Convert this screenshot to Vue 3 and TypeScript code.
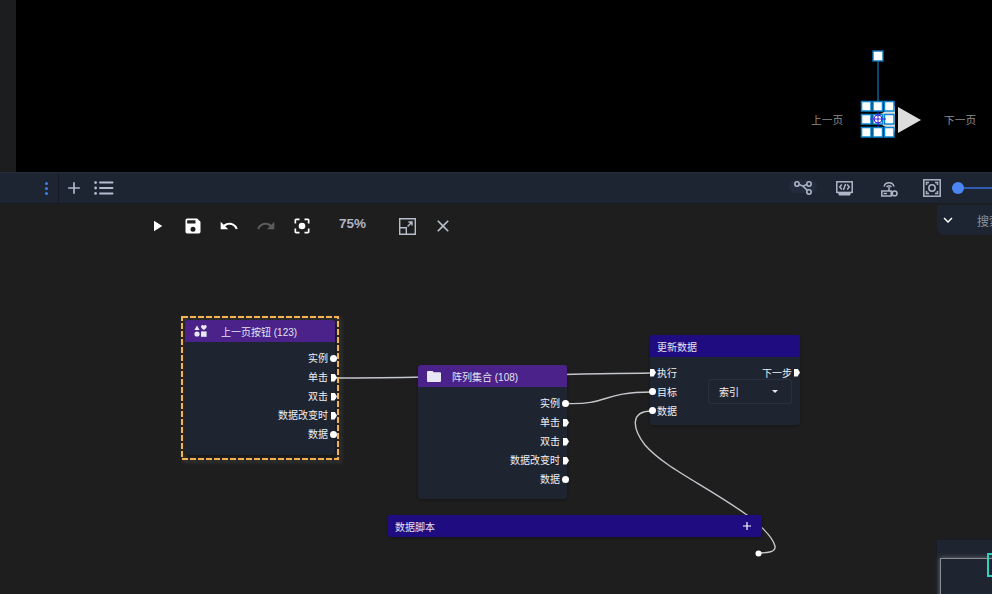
<template>
  <div class="editor">
    <section class="preview">
      <div class="preview-side"></div>
      <div class="preview-stage">
        <span class="page-label prev">上一页</span>
        <span class="page-label next">下一页</span>
        <svg class="stage-svg" viewBox="840 40 100 110">
          <path d="M895 106 L871 119 L895 132 Z" fill="#ddd" />
          <path d="M898 107 L921 120 L898 133 Z" fill="#ddd" />
          <line x1="878" y1="61" x2="878" y2="101" stroke="#0f5f8f" stroke-width="1.5" />
          <rect x="873" y="51" width="10" height="10" fill="#fff" stroke="#0a76b8" stroke-width="1.4" />
          <rect
            v-for="h in handles"
            :key="h.key"
            :x="h.x"
            :y="h.y"
            width="9.5"
            height="9.5"
            fill="#fff"
            stroke="#0a86d0"
            stroke-width="1.5"
          />
          <g stroke="#3b1de0" fill="none">
            <circle cx="878" cy="119" r="4" />
            <line x1="870" y1="119" x2="886" y2="119" />
            <line x1="878" y1="111" x2="878" y2="127" />
          </g>
        </svg>
      </div>
    </section>

    <header class="toolbar">
      <div class="toolbar-left">
        <div class="kebab"><i></i><i></i><i></i></div>
        <div class="divider"></div>
        <svg class="tool-icon plus" viewBox="0 0 24 24"><path d="M19 13h-6v6h-2v-6H5v-2h6V5h2v6h6v2z" /></svg>
        <svg class="tool-icon list" viewBox="0 0 20 14">
          <circle cx="1.6" cy="1.6" r="1.4" /><rect x="5" y="0.6" width="14.5" height="2" rx="1" />
          <circle cx="1.6" cy="7" r="1.4" /><rect x="5" y="6" width="14.5" height="2" rx="1" />
          <circle cx="1.6" cy="12.4" r="1.4" /><rect x="5" y="11.4" width="14.5" height="2" rx="1" />
        </svg>
      </div>
      <div class="toolbar-right">
        <div class="graph-pill">
          <svg class="line-icon" viewBox="0 0 18 14">
            <circle cx="3" cy="3" r="2.2" /><circle cx="15" cy="3" r="2.2" /><circle cx="15" cy="11" r="2.2" />
            <path d="M5.1 3.4 L9 5.2 L12.9 3.4 M9 5.2 L13.4 9.4" />
          </svg>
        </div>
        <svg class="line-icon code" viewBox="0 0 17 15">
          <rect x="0.8" y="0.8" width="15.4" height="10.6" />
          <path class="solid" d="M2 11.5h13l-1 3H3z" />
          <path d="M5.8 3.5 L3.8 6 L5.8 8.5M11.2 3.5 L13.2 6 L11.2 8.5M9.6 3 L7.4 9" />
        </svg>
        <svg class="line-icon net" viewBox="0 0 17 17">
          <path d="M3 6.5a5.2 5.2 0 0 1 10 0M5.6 7a2.8 2.8 0 0 1 4.8 0M8 7v4" />
          <rect x="0.8" y="11" width="9.4" height="5" />
          <circle cx="13.6" cy="13.4" r="2.4" />
          <path d="M2.6 13.5h3.4" />
        </svg>
        <svg class="line-icon frame" viewBox="0 0 18 18">
          <rect x="0.8" y="0.8" width="16.4" height="16.4" />
          <circle cx="9" cy="9" r="3.2" />
          <path d="M3.5 6V3.5H6M12 3.5h2.5V6M3.5 12v2.5H6M12 14.5h2.5V12" />
        </svg>
        <div class="zoom-slider"><span class="knob"></span><span class="rail"></span></div>
      </div>
    </header>

    <main class="canvas">
      <svg class="wires" viewBox="0 204 992 390">
        <path v-for="w in wires" :key="w" :d="w" />
        <circle class="wire-end" cx="758.5" cy="553.5" r="3" />
      </svg>

      <div class="actions">
        <svg class="act play" viewBox="0 0 24 24"><path d="M8 5v14l11-7z" /></svg>
        <svg class="act save" viewBox="0 0 24 24"><path d="M17 3H5a2 2 0 0 0-2 2v14a2 2 0 0 0 2 2h14a2 2 0 0 0 2-2V7l-4-4zm-5 16a3 3 0 1 1 0-6 3 3 0 0 1 0 6zm3-10H5V5h10v4z" /></svg>
        <svg class="act undo" viewBox="0 0 24 24"><path d="M12.5 8c-2.65 0-5.05.99-6.9 2.6L2 7v9h9l-3.62-3.62c1.39-1.16 3.16-1.88 5.12-1.88 3.54 0 6.55 2.31 7.6 5.5l2.37-.78C21.08 11.03 17.15 8 12.5 8z" /></svg>
        <svg class="act redo" viewBox="0 0 24 24"><path d="M18.4 10.6C16.55 8.99 14.15 8 11.5 8c-4.65 0-8.58 3.03-9.96 7.22L3.9 16c1.05-3.19 4.05-5.5 7.6-5.5 1.95 0 3.73.72 5.12 1.88L13 16h9V7l-3.6 3.6z" /></svg>
        <svg class="act focus" viewBox="0 0 24 24"><path d="M12 8a4 4 0 1 0 0 8 4 4 0 0 0 0-8zm-7 7H3v4c0 1.1.9 2 2 2h4v-2H5v-4zM5 5h4V3H5c-1.1 0-2 .9-2 2v4h2V5zm14-2h-4v2h4v4h2V5c0-1.1-.9-2-2-2zm0 16h-4v2h4c1.1 0 2-.9 2-2v-4h-2v4z" /></svg>
        <span class="zoom-text">75%</span>
        <svg class="act expand" viewBox="0 0 17 17">
          <path d="M0.7 0.7h15.6v15.6H0.7zM0.7 9.7h6.6v6.6M8.6 8.4 13 4M9.4 4H13v3.6" fill="none" stroke="currentColor" stroke-width="1.4" />
        </svg>
        <svg class="act close" viewBox="0 0 24 24"><path d="M19 6.41 17.59 5 12 10.59 6.41 5 5 6.41 10.59 12 5 17.59 6.41 19 12 13.41 17.59 19 19 17.59 13.41 12z" /></svg>
      </div>

      <div class="search-tab">
        <svg viewBox="0 0 24 24" class="chevron"><path d="M7.41 8.59 12 13.17l4.59-4.58L18 10l-6 6-6-6z" /></svg>
        <span>搜索</span>
      </div>

      <!-- 按钮节点 -->
      <svg class="selected-outline" viewBox="0 0 158 144">
        <rect x="1" y="1" width="156" height="142" />
      </svg>

      <article v-for="node in nodes" :key="node.title" class="node" :style="node.style">
        <div class="node-head" :class="[node.kind, node.icon]">
          <svg v-if="node.icon === 'shapes'" class="node-icon" viewBox="0 0 13 12">
            <path d="M3 0.5 5.6 5H0.4z" /><path d="M9.8 5C8.4 3.9 7 2.9 7 1.7 7 .7 7.8 0 8.6 0c.5 0 1 .3 1.2.8.2-.5.7-.8 1.2-.8.9 0 1.7.7 1.7 1.7 0 1.2-1.5 2.2-2.9 3.3z" />
            <circle cx="3" cy="9" r="2.6" /><rect x="7" y="6.4" width="5.6" height="5.4" />
          </svg>
          <svg v-if="node.icon === 'folder'" class="node-icon" viewBox="0 0 14 11">
            <path d="M1 0h4.5l1.3 1.3H13a1 1 0 0 1 1 1V10a1 1 0 0 1-1 1H1a1 1 0 0 1-1-1V1a1 1 0 0 1 1-1z" />
          </svg>
          <span>{{ node.title }}</span>
        </div>
        <ul class="ports">
          <li v-for="p in node.ports" :key="p.name">
            <span>{{ p.name }}</span>
            <i :class="p.type"></i>
          </li>
        </ul>
      </article>

      <!-- 更新数据节点 -->
      <article class="node update">
        <div class="node-head script"><span>更新数据</span></div>
        <div class="update-body">
          <ul class="inputs">
            <li><i class="flow"></i><span>执行</span></li>
            <li><i class="value"></i><span>目标</span></li>
            <li><i class="value"></i><span>数据</span></li>
          </ul>
          <div class="update-right">
            <div class="next-row"><span>下一步</span><i class="flow"></i></div>
            <div class="select"><span>索引</span><b></b></div>
          </div>
        </div>
      </article>

      <div class="script-bar">
        <span>数据脚本</span>
        <svg viewBox="0 0 24 24"><path d="M19 13h-6v6h-2v-6H5v-2h6V5h2v6h6v2z" /></svg>
      </div>

      <div class="minimap">
        <div class="minimap-view"></div>
        <div class="minimap-mark"></div>
      </div>
    </main>
  </div>
</template>

<script setup lang="ts">
interface Port {
  name: string
  type: 'value' | 'flow'
}

const eventPorts: Port[] = [
  { name: '实例', type: 'value' },
  { name: '单击', type: 'flow' },
  { name: '双击', type: 'flow' },
  { name: '数据改变时', type: 'flow' },
  { name: '数据', type: 'value' },
]

const canvasTop = 204

function place(left: number, top: number, width: number, height: number) {
  return {
    left: `${left}px`,
    top: `${top - canvasTop}px`,
    width: `${width}px`,
    height: `${height}px`,
  }
}

const nodes = [
  {
    title: '上一页按钮 (123)',
    kind: 'component',
    icon: 'shapes',
    ports: eventPorts,
    style: place(185, 320, 150, 135),
  },
  {
    title: '阵列集合 (108)',
    kind: 'component',
    icon: 'folder',
    ports: eventPorts,
    style: place(418, 365, 149, 134),
  },
]

const wires = [
  'M334 378 C 420 378, 560 374, 652 373',
  'M566 403.5 C 610 405, 600 392, 652 392',
  'M652 411 C 630 411, 632 428, 645 445 C 665 468, 705 485, 747 515 C 757 523, 772 535, 775 546 C 776 552, 768 553, 758 553',
]

const handles = [101.5, 114.5, 127.5].flatMap((y, r) =>
  [861.5, 873, 884.5].map((x, c) => ({ key: `${r}-${c}`, x, y })),
)
</script>

<style>
html,
body {
  margin: 0;
  background: #1e1e1e;
  overflow: hidden;
}
</style>

<style scoped>
.editor {
  width: 992px;
  height: 594px;
  display: flex;
  flex-direction: column;
  overflow: hidden;
  font-family: "Liberation Sans", "Noto Sans CJK SC", sans-serif;
  font-size: 10px;
  color: #eef0f5;
  background: #1e1e1e;
}

.preview {
  display: flex;
  height: 172px;
  flex: none;
}

.preview-side {
  width: 16px;
  background: #1c1d1f;
}

.preview-stage {
  position: relative;
  flex: 1;
  background: #000;
}

.stage-svg {
  position: absolute;
  left: 824px;
  top: 40px;
  width: 100px;
  height: 110px;
}

.page-label {
  position: absolute;
  top: 113px;
  line-height: 14px;
  font-size: 10.7px;
  color: #8f8f8f;
}

.page-label.prev {
  left: 795px;
}

.page-label.next {
  left: 928px;
}

.toolbar {
  flex: none;
  height: 32px;
  box-sizing: border-box;
  display: flex;
  align-items: center;
  justify-content: space-between;
  background: #1e2532;
  border-top: 1px solid #262d3a;
  border-bottom: 1px solid #171b22;
}

.toolbar-left {
  display: flex;
  align-items: center;
  height: 100%;
  padding-left: 45px;
}

.kebab {
  display: flex;
  flex-direction: column;
  gap: 2px;
  width: 13px;
}

.kebab i {
  width: 3px;
  height: 3px;
  border-radius: 50%;
  background: #3f7fe8;
}

.divider {
  width: 1px;
  height: 100%;
  background: #171b22;
}

.tool-icon {
  fill: #b3bccd;
}

.plus {
  width: 20px;
  height: 20px;
  margin-left: 5px;
}

.list {
  width: 20px;
  height: 14px;
  margin-left: 10px;
}

.toolbar-right {
  display: flex;
  align-items: center;
}

.line-icon {
  fill: none;
  stroke: #aeb7c8;
  stroke-width: 1.5;
  flex: none;
}

.line-icon .solid {
  fill: #aeb7c8;
  stroke: none;
}

.graph-pill {
  width: 28px;
  height: 13px;
  display: flex;
  align-items: center;
  border-radius: 7px;
  background: #232c3c;
  margin-top: -3px;
}

.graph-pill .line-icon {
  width: 18px;
  height: 14px;
  margin-left: 5px;
  margin-top: 3px;
}

.code {
  width: 17px;
  height: 15px;
  margin-left: 19px;
}

.net {
  width: 17px;
  height: 17px;
  margin-left: 28px;
}

.frame {
  width: 18px;
  height: 18px;
  margin-left: 25px;
}

.zoom-slider {
  display: flex;
  align-items: center;
  width: 40px;
  margin-left: 11px;
}

.knob {
  width: 12px;
  height: 12px;
  border-radius: 50%;
  background: #4c86f5;
  flex: none;
}

.rail {
  flex: 1;
  height: 1.5px;
  background: #2f5bb0;
}

.canvas {
  position: relative;
  flex: 1;
  background: #1e1e1e;
}

.wires {
  position: absolute;
  inset: 0;
  width: 992px;
  height: 390px;
  fill: none;
  stroke: #c4c7cc;
  stroke-width: 1.4;
}

.wire-end {
  fill: #fff;
  stroke: none;
}

.actions {
  position: absolute;
  left: 148px;
  top: 12px;
  display: flex;
  align-items: center;
  height: 20px;
}

.act {
  flex: none;
  fill: #fff;
}

.play {
  width: 18px;
  height: 18px;
}

.save,
.undo,
.redo,
.focus {
  width: 20px;
  height: 20px;
  margin-left: 16px;
}

.save {
  margin-left: 17px;
}

.redo {
  margin-left: 17px;
  fill: #5c5c5c;
}

.zoom-text {
  margin-left: 27px;
  margin-top: -6px;
  font-size: 13.5px;
  font-weight: 700;
  color: #aeb6c6;
}

.expand {
  width: 17px;
  height: 17px;
  margin-left: 33px;
  fill: none;
  color: #b6bdcc;
}

.close {
  width: 20px;
  height: 20px;
  margin-left: 17px;
  fill: #b6bdcc;
}

.search-tab {
  position: absolute;
  left: 937px;
  top: 1px;
  width: 70px;
  height: 30px;
  box-sizing: border-box;
  padding-left: 2px;
  display: flex;
  align-items: center;
  border-radius: 0 0 0 8px;
  background: #1e2532;
  color: #8b909a;
  font-size: 12px;
}

.chevron {
  width: 18px;
  height: 18px;
  fill: #fff;
  flex: none;
}

.search-tab span {
  margin-left: 20px;
  white-space: nowrap;
}

.selected-outline {
  position: absolute;
  left: 181px;
  top: 112px;
  width: 158px;
  height: 144px;
  fill: none;
  stroke: #f5b354;
  stroke-width: 2;
  stroke-dasharray: 6 2;
  filter: drop-shadow(2px 2px 2px rgba(255, 255, 255, 0.22));
}

.node {
  position: absolute;
  background: #1e2530;
  border-radius: 3px;
  box-shadow: 0 1px 3px rgba(0, 0, 0, 0.3);
}

.node-head {
  height: 22px;
  display: flex;
  align-items: center;
  border-radius: 3px 3px 0 0;
  color: #e4e4f0;
}

.node-head.component {
  background: #4a2289;
  padding-left: 9px;
}

.node-head.script {
  background: #1e0c80;
  padding-left: 7px;
}

.node-icon {
  width: 13px;
  height: 12px;
  fill: #e8e8f4;
  margin-right: 14px;
}

.folder .node-icon {
  width: 14px;
  height: 11px;
  margin-right: 11px;
}

.ports {
  list-style: none;
  margin: 7px 0 0;
  padding: 0;
}

.ports li {
  height: 19px;
  display: flex;
  align-items: center;
  justify-content: flex-end;
  gap: 2px;
  line-height: 19px;
  white-space: nowrap;
}

.ports li i {
  margin-right: -2px;
}

i.value {
  width: 7px;
  height: 7px;
  border-radius: 50%;
  background: #fff;
  flex: none;
}

i.flow {
  flex: none;
  width: 6px;
  height: 8px;
  margin-left: 1px;
  background: #fff;
  clip-path: polygon(0 0, 60% 0, 100% 50%, 60% 100%, 0 100%);
}

.update {
  left: 650px;
  top: 131px;
  width: 150px;
  height: 90px;
}

.update-body {
  display: flex;
  justify-content: space-between;
}

.inputs {
  list-style: none;
  margin: 6px 0 0;
  padding: 0;
}

.inputs li {
  height: 19px;
  display: flex;
  align-items: center;
  gap: 1px;
  white-space: nowrap;
}

.inputs i {
  margin-left: -1px;
}

.inputs i.flow {
  margin-left: 0;
}

.update-right {
  display: flex;
  flex-direction: column;
  align-items: flex-end;
  margin-top: 6px;
}

.next-row {
  height: 19px;
  display: flex;
  align-items: center;
  gap: 1px;
  margin-right: 0;
}

.select {
  box-sizing: border-box;
  width: 84px;
  height: 25px;
  margin-right: 8px;
  margin-top: -3px;
  display: flex;
  align-items: center;
  justify-content: space-between;
  padding: 0 10px;
  border: 1px solid #2a313d;
  border-radius: 3px;
}

.select b {
  width: 0;
  height: 0;
  border-left: 3px solid transparent;
  border-right: 3px solid transparent;
  border-top: 3px solid #e6e8ee;
  margin-right: 3px;
}

.script-bar {
  position: absolute;
  left: 388px;
  top: 311px;
  width: 374px;
  height: 22px;
  box-sizing: border-box;
  padding: 0 8px 0 7px;
  display: flex;
  align-items: center;
  justify-content: space-between;
  background: #1e0c80;
  border-radius: 2px;
  color: #e4e4f0;
  box-shadow: 0 1px 3px rgba(0, 0, 0, 0.3);
}

.script-bar svg {
  width: 14px;
  height: 14px;
  fill: #fff;
}

.minimap {
  position: absolute;
  left: 936px;
  top: 335px;
  width: 60px;
  height: 60px;
  background: #1e2530;
  border: 1px solid #191c22;
}

.minimap-view {
  position: absolute;
  left: 3px;
  top: 18px;
  width: 60px;
  height: 60px;
  border: 1px solid #8a8d92;
  box-shadow: 0 0 5px rgba(255, 255, 255, 0.35);
}

.minimap-mark {
  position: absolute;
  left: 50px;
  top: 13px;
  width: 20px;
  height: 24px;
  box-sizing: border-box;
  border: 2px solid #2fd0c0;
}
</style>
